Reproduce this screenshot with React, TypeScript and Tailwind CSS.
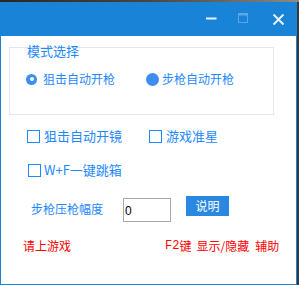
import React from "react";

function TitleControls() {
  return (
    <svg width="100" height="34" viewBox="0 0 100 34" className="block">
      <line x1="10" y1="16.5" x2="20.5" y2="16.5" stroke="#e9f2fb" strokeWidth="2" />
      <rect x="42.5" y="11.5" width="9" height="9" fill="none" stroke="#5ea6e6" strokeWidth="1" />
      <line x1="42.5" y1="12.5" x2="51.5" y2="12.5" stroke="#5ea6e6" strokeWidth="2" />
      <line x1="77.5" y1="12.5" x2="87.5" y2="22.5" stroke="#e9f2fb" strokeWidth="2" />
      <line x1="87.5" y1="12.5" x2="77.5" y2="22.5" stroke="#e9f2fb" strokeWidth="2" />
    </svg>
  );
}

export default function App() {
  return (
    <div className="w-[299px] h-[285px] bg-[#3b3836] flex flex-col overflow-hidden font-['Noto_Sans_CJK_SC',sans-serif]">
      <div className="h-[2px] w-full bg-gradient-to-r from-[#2a2622] via-[#4a4540] to-[#8a8a88]" />
      <div className="flex flex-row">
        <div className="w-[297px] h-[283px] border-x border-b border-[#1883d7] flex flex-col bg-white">
          {/* title bar */}
          <div className="h-[34px] bg-[#1883d7] flex justify-end">
            <TitleControls />
          </div>
          {/* content */}
          <div className="flex flex-col">
            {/* group box */}
            <div className="ml-[8px] mt-[11px] w-[265px] h-[68px] border border-[#e6e6e6] flex flex-col">
              <div className="ml-[17px] -mt-[4px] text-[13px] leading-[13px] text-[#1e88ff]">模式选择</div>
              <div className="mt-[15px] ml-[16px] flex items-center h-[14px]">
                <div className="w-[120px] flex items-center">
                  <div className="w-[11px] h-[11px] rounded-full bg-[#3d8ef0] flex items-center justify-center">
                    <div className="w-[4px] h-[4px] rounded-full bg-white" />
                  </div>
                  <span className="ml-[6px] text-[12px] leading-[14px] text-[#1e88ff]">狙击自动开枪</span>
                </div>
                <div className="flex items-center">
                  <div className="w-[13px] h-[13px] rounded-full bg-[#3d8ef0]" />
                  <span className="ml-[3px] text-[12px] leading-[14px] text-[#1e88ff]">步枪自动开枪</span>
                </div>
              </div>
            </div>

            {/* checkbox row 1 */}
            <div className="mt-[14px] ml-[26px] flex items-center h-[14px]">
              <div className="w-[122px] flex items-center">
                <div className="w-[13px] h-[13px] border border-[#1e88ff] bg-white" />
                <span className="ml-[4px] text-[13px] leading-[14px] text-[#1e88ff]">狙击自动开镜</span>
              </div>
              <div className="flex items-center">
                <div className="w-[13px] h-[13px] border border-[#1e88ff] bg-white" />
                <span className="ml-[4px] text-[13px] leading-[14px] text-[#1e88ff]">游戏准星</span>
              </div>
            </div>

            {/* checkbox row 2 */}
            <div className="mt-[20px] ml-[27px] flex items-center h-[14px]">
              <div className="w-[13px] h-[13px] border border-[#1e88ff] bg-white" />
              <span className="ml-[3px] text-[13px] leading-[14px] text-[#1e88ff]">W+F一键跳箱</span>
            </div>

            {/* row 3 */}
            <div className="mt-[19px] ml-[30px] flex items-start h-[26px]">
              <span className="mt-[7px] w-[72px] text-[12px] leading-[12px] text-[#1e88ff]">步枪压枪幅度</span>
              <div className="mt-[2px] ml-[20px] w-[48px] h-[24px] border border-[#a9a9a9] bg-white flex items-center pl-[1px]">
                <span className="text-[12px] leading-[12px] text-black font-['Liberation_Sans',sans-serif] mt-[2px]">0</span>
              </div>
              <div className="ml-[15px] w-[43px] h-[20px] bg-[#2a88e0] flex items-center justify-center">
                <span className="text-[12px] leading-[12px] text-white">说明</span>
              </div>
            </div>

            {/* bottom row */}
            <div className="mt-[17px] ml-[22px] flex items-center h-[14px] text-[12px] leading-[14px] text-[#ff0000]">
              <span className="w-[142px]">请上游戏</span>
              <span className="font-['Liberation_Mono',monospace]">F2</span>
              <span>键</span>
              <span className="ml-[5px]">显示/隐藏</span>
              <span className="ml-[6px]">辅助</span>
            </div>
          </div>
        </div>
      </div>
    </div>
  );
}
